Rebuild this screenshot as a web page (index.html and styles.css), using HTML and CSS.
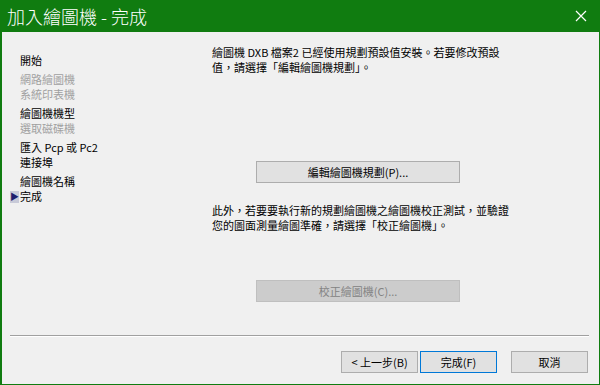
FILE: index.html
```html
<!DOCTYPE html>
<html lang="zh-Hant">
<head>
  <meta charset="UTF-8" />
  <meta name="viewport" content="width=device-width, initial-scale=1.0"/>
  <title>加入繪圖機 - 完成</title>
  <link rel="stylesheet" href="styles.css">
</head>
<body>

<div class="ventana">
  <div class="titulo">
    <span class="titulo-texto">加入繪圖機 - 完成</span>
    <svg class="cerrar" width="12" height="12" viewBox="0 0 12 12">
      <path d="M1 1 L11 11 M11 1 L1 11" stroke="#fff" stroke-width="1.2" fill="none"/>
    </svg>
  </div>

  <div class="cuerpo">
    <div class="principal">
      <ul class="pasos">
        <li class="grupo"><span>開始</span></li>
        <li class="grupo">
          <span class="off">網路繪圖機</span>
          <span class="off">系統印表機</span>
        </li>
        <li class="grupo">
          <span>繪圖機機型</span>
          <span class="off">選取磁碟機</span>
        </li>
        <li class="grupo">
          <span>匯入 Pcp 或 Pc2</span>
          <span>連接埠</span>
        </li>
        <li class="grupo">
          <span>繪圖機名稱</span>
          <span class="actual"><i class="flecha">&#9654;</i>完成</span>
        </li>
      </ul>

      <div class="contenido">
        <p class="texto">繪圖機 DXB 檔案2 已經使用規劃預設值安裝。若要修改預設<br>值，請選擇「編輯繪圖機規劃」。</p>
        <button class="boton ancho editar">編輯繪圖機規劃(P)...</button>
        <p class="texto">此外，若要要執行新的規劃繪圖機之繪圖機校正測試，並驗證<br>您的圖面測量繪圖準確，請選擇「校正繪圖機」。</p>
        <button class="boton ancho calibrar" disabled>校正繪圖機(C)...</button>
      </div>
    </div>

    <div class="separador"></div>

    <div class="acciones">
      <button class="boton">&lt; 上一步(B)</button>
      <button class="boton defecto">完成(F)</button>
      <button class="boton cancelar">取消</button>
    </div>
  </div>
</div>

</body>
</html>
```

FILE: styles.css
```css
body {
  margin: 0;
  font-family: "Noto Sans CJK TC", "Liberation Sans", sans-serif;
  font-size: 11px;
  color: #000;
  background-color: #f0f0f0;
}
.ventana {
  width: 600px;
  height: 385px;
  box-sizing: border-box;
  display: flex;
  flex-direction: column;
  border: 1px solid #107c10;
  border-top: none;
  border-left-width: 2px;
}
.titulo {
  height: 32px;
  background-color: #107c10;
  color: #fff;
  display: flex;
  align-items: center;
  justify-content: space-between;
  padding: 0 13px 0 7px;
  margin-left: -2px;
  margin-right: -1px;
}
.titulo-texto {
  font-size: 18px;
  font-weight: 300;
  line-height: 32px;
}
.cerrar {
  display: block;
}
.cuerpo {
  flex: 1;
  display: flex;
  flex-direction: column;
  background-color: #f0f0f0;
}
.principal {
  flex: 1;
  display: flex;
}
.pasos {
  list-style: none;
  margin: 0;
  padding: 21px 0 0 18px;
  width: 192px;
}
.grupo {
  display: flex;
  flex-direction: column;
  margin-bottom: 4px;
}
.grupo span {
  line-height: 15px;
  height: 15px;
}
.grupo .off {
  color: #a0a0a0;
}
.actual {
  display: flex;
  align-items: center;
}
.flecha {
  font-style: normal;
  font-size: 9px;
  color: #1e1e6e;
  background-color: #c8cad8;
  width: 9px;
  height: 12px;
  line-height: 12px;
  margin-left: -10px;
  margin-right: 1px;
  text-align: center;
}
.contenido {
  flex: 1;
  padding: 13px 0 0 0;
  display: flex;
  flex-direction: column;
  align-items: flex-start;
}
.texto {
  margin: 0;
  line-height: 15px;
  white-space: nowrap;
}
.boton {
  font-family: "Noto Sans CJK TC", "Liberation Sans", sans-serif;
  font-size: 11px;
  color: #000;
  background-color: #e1e1e1;
  border: 1px solid #adadad;
  height: 22px;
  width: 77px;
  padding: 0;
  line-height: 18px;
}
.ancho {
  width: 204px;
  margin-left: 44px;
}
.editar {
  margin-top: 86px;
  margin-bottom: 20px;
}
.calibrar {
  margin-top: 47px;
  background-color: #cccccc;
  border-color: #bfbfbf;
  color: #838383;
}
.separador {
  margin: 0 10px 0 8px;
  border-top: 1px solid #a0a0a0;
  border-bottom: 1px solid #fff;
}
.acciones {
  display: flex;
  justify-content: flex-end;
  gap: 2px;
  padding: 14px 11px 11px 0;
}
.defecto {
  border-color: #0078d7;
}
.cancelar {
  margin-left: 12px;
}
```
